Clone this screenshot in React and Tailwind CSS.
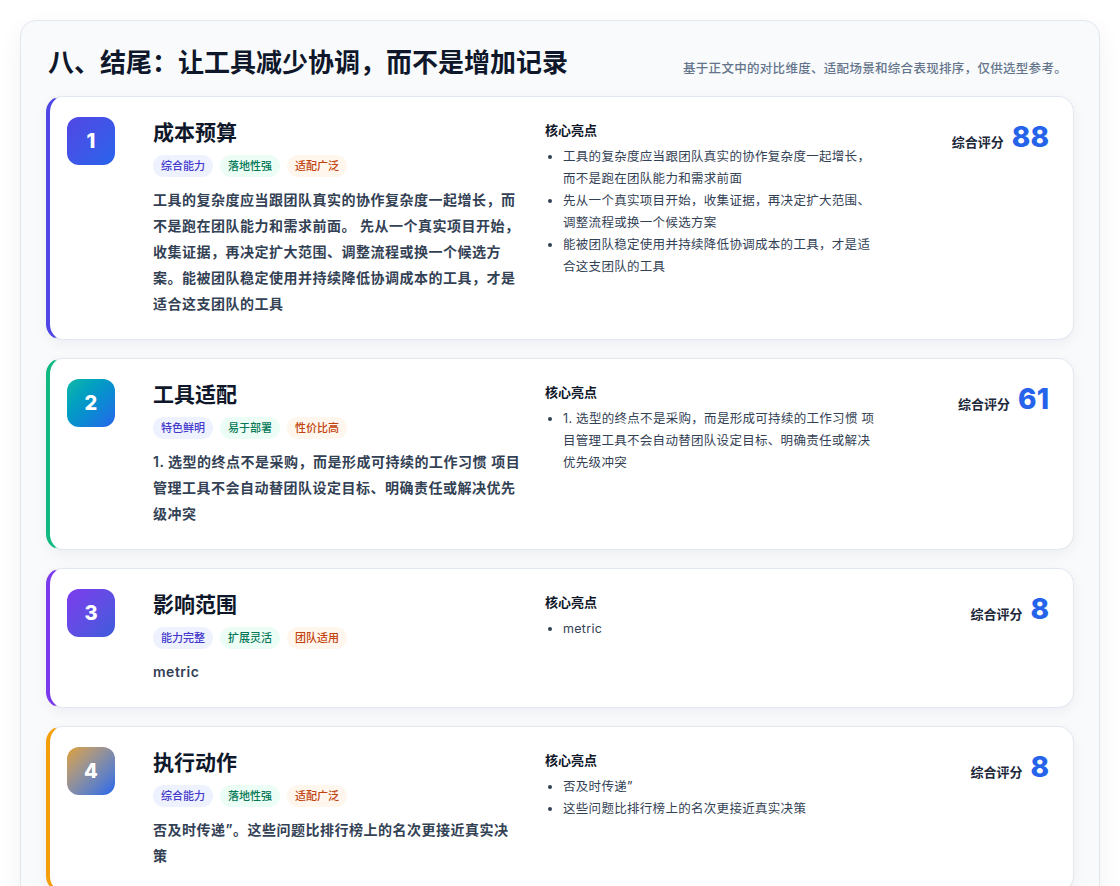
const cards = [
  {
    n: "1", title: "成本预算", score: "88", bar: "border-l-[#4f46e5]", badge: "bg-gradient-to-br from-[#4f46e5] to-[#2563eb]",
    tags: ["综合能力", "落地性强", "适配广泛"],
    body: "工具的复杂度应当跟团队真实的协作复杂度一起增长，而不是跑在团队能力和需求前面。 先从一个真实项目开始，收集证据，再决定扩大范围、调整流程或换一个候选方案。能被团队稳定使用并持续降低协调成本的工具，才是适合这支团队的工具",
    points: ["工具的复杂度应当跟团队真实的协作复杂度一起增长，而不是跑在团队能力和需求前面", "先从一个真实项目开始，收集证据，再决定扩大范围、调整流程或换一个候选方案", "能被团队稳定使用并持续降低协调成本的工具，才是适合这支团队的工具"],
  },
  {
    n: "2", title: "工具适配", score: "61", bar: "border-l-[#10b981]", badge: "bg-gradient-to-br from-[#14b8a6] to-[#2563eb]",
    tags: ["特色鲜明", "易于部署", "性价比高"],
    body: "1. 选型的终点不是采购，而是形成可持续的工作习惯 项目管理工具不会自动替团队设定目标、明确责任或解决优先级冲突",
    points: ["1. 选型的终点不是采购，而是形成可持续的工作习惯 项目管理工具不会自动替团队设定目标、明确责任或解决优先级冲突"],
  },
  {
    n: "3", title: "影响范围", score: "8", bar: "border-l-[#7c3aed]", badge: "bg-gradient-to-br from-[#7c3aed] to-[#3b5bdb]",
    tags: ["能力完整", "扩展灵活", "团队适用"],
    body: "metric",
    points: ["metric"],
  },
  {
    n: "4", title: "执行动作", score: "8", bar: "border-l-[#f59e0b]", badge: "bg-gradient-to-br from-[#e0a020] to-[#2563eb]",
    tags: ["综合能力", "落地性强", "适配广泛"],
    body: "否及时传递”。这些问题比排行榜上的名次更接近真实决策",
    points: ["否及时传递”", "这些问题比排行榜上的名次更接近真实决策"],
  },
];

const tagStyles = ["bg-[#eef2ff] text-[#4338ca]", "bg-[#ecfdf5] text-[#047857]", "bg-[#fff7ed] text-[#c2410c]"];

export default function App() {
  return (
    <div className="min-h-[886px] bg-white p-5" style={{ fontFamily: "Inter, 'Noto Sans CJK SC', sans-serif" }}>
      <div className="rounded-2xl border border-[#e2e8f0] bg-[#f8fafc] px-[25px] pb-[26px] pt-6 shadow-[0_8px_24px_rgba(15,23,42,0.06)]">
        <div className="mb-[15px] flex items-end justify-between pl-[2px] pr-[7px]">
          <h1 className="text-[26px] font-bold leading-9 text-[#0f172a]">八、结尾：让工具减少协调，而不是增加记录</h1>
          <p className="pb-[2px] text-[12.5px] font-medium tracking-[0.3px] text-[#64748b]">基于正文中的对比维度、适配场景和综合表现排序，仅供选型参考。</p>
        </div>
        <div className="flex flex-col gap-[18px]">
          {cards.map((c) => (
            <div key={c.n} className={`flex rounded-2xl border border-[#e2e8f0] border-l-4 ${c.bar} bg-white pb-[22px] pl-[17px] pr-6 pt-5 shadow-[0_4px_14px_rgba(15,23,42,0.05)]`}>
              <div className={`flex h-12 w-12 shrink-0 items-center justify-center rounded-xl ${c.badge} text-[20px] font-extrabold text-white`}>{c.n}</div>
              <div className="ml-[38px] w-[370px] shrink-0">
                <h2 className="text-[21px] font-bold leading-8 text-[#0f172a]">{c.title}</h2>
                <div className="mt-[6px] flex gap-[7px]">
                  {c.tags.map((t, i) => (
                    <span key={t} className={`rounded-full px-2 py-[3px] text-[11px] font-medium leading-4 ${tagStyles[i]}`}>{t}</span>
                  ))}
                </div>
                <p className="mt-[10px] text-[14px] font-semibold leading-[26px] tracking-[0.5px] text-[#334155]">{c.body}</p>
              </div>
              <div className="ml-[22px] w-[330px] shrink-0 pt-[1px]">
                <h3 className="text-[13px] font-bold leading-6 text-[#0f172a]">核心亮点</h3>
                <ul className="mt-[4px] list-disc pl-[18px] text-[12.5px] leading-[22px] tracking-[0.3px] text-[#334155]">
                  {c.points.map((p) => <li key={p}>{p}</li>)}
                </ul>
              </div>
              <div className="flex flex-1 items-baseline justify-end gap-2 pt-[2px]">
                <span className="text-[13px] font-bold text-[#1e293b]">综合评分</span>
                <span className="text-[28px] font-extrabold leading-9 text-[#2563eb]">{c.score}</span>
              </div>
            </div>
          ))}
        </div>
      </div>
    </div>
  );
}
